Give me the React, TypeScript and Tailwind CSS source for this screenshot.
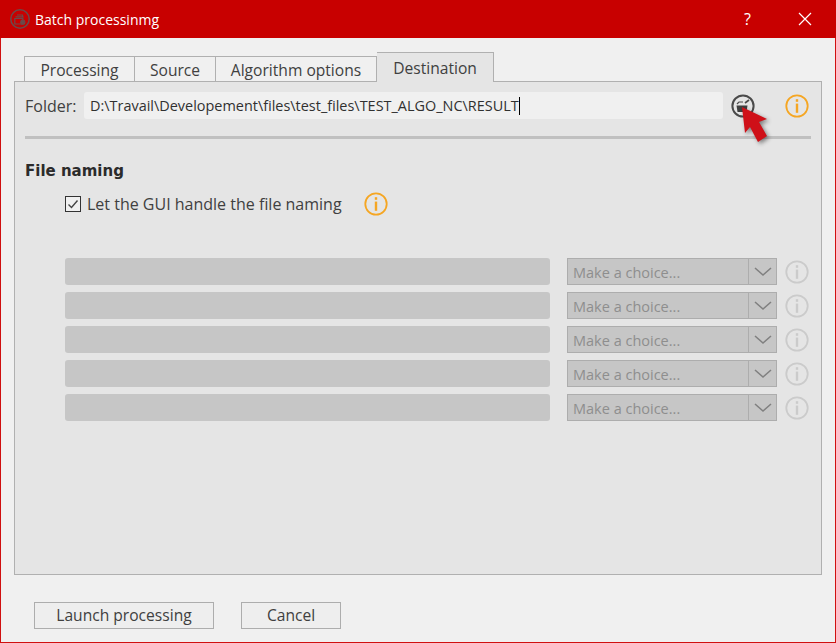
const font = 'font-["Open_Sans","Noto_Sans",sans-serif]';

// info icon, orange when active, grey when disabled
const InfoIcon = ({ disabled = false }: { disabled?: boolean }) => (
  <svg width="24" height="24" viewBox="0 0 24 24" fill="none" className={disabled ? 'text-[#cbcbcb]' : 'text-[#f5a623]'}>
    <circle cx="12" cy="12" r="10.7" stroke="currentColor" strokeWidth="1.8" />
    <rect x="10.8" y="5.2" width="2.4" height="2.6" fill="currentColor" />
    <rect x="10.8" y="9.6" width="2.4" height="9.2" fill="currentColor" />
  </svg>
);

const AppIcon = () => (
  <svg width="20" height="20" viewBox="0 0 20 20" fill="none" stroke="#6b4a4a" strokeWidth="1.2">
    <circle cx="10" cy="10" r="9.2" strokeWidth="1.5" />
    <path d="M7 6h5.5v1.5M5.5 7.8h7.5v1M4.8 9.5h8v5.5h-8z" />
    <circle cx="12.8" cy="13.2" r="2" fill="#6b4a4a" />
  </svg>
);

const FolderIcon = () => (
  <svg width="24" height="24" viewBox="0 0 24 24" fill="none">
    <circle cx="12" cy="12" r="10.6" stroke="#4a4a4a" strokeWidth="2" fill="#e5e5e5" />
    <path d="M5.5 11.5h11l-1 6.5h-9z" fill="#3f3f3f" />
    <path d="M6 10l2-2h4" stroke="#4a4a4a" strokeWidth="1.2" />
    <path d="M14 9l4-3" stroke="#4a4a4a" strokeWidth="1.6" />
  </svg>
);

const Cursor = () => (
  <svg width="44" height="48" viewBox="0 0 44 48" className="absolute left-[6px] top-[7px] drop-shadow-[2px_2px_2px_rgba(0,0,0,0.45)]">
    <path d="M5 6L8 32L13 26L21 41L30 35L22 21L30 18Z" fill="#cf1018" />
  </svg>
);

const Tab = ({ label, className }: { label: string; className: string }) => (
  <div className={`flex items-center justify-center border border-b-0 border-[#b0b0b0] text-[15.6px] text-[#404040] ${className}`}>
    {label}
  </div>
);

const ChoiceRow = () => (
  <div className="flex h-[27px] items-center">
    <div className="h-[27px] w-[485px] rounded-[3px] bg-[#c6c6c6]" />
    <div className="ml-[17px] flex h-[27px] w-[210px] border border-[#adadad] bg-[#c6c6c6]">
      <div className="flex-1 pl-[5px] pt-px text-[14.5px] leading-[26px] text-[#8e8e8e]">Make a choice...</div>
      <div className="flex w-[28px] items-center justify-center border-l border-[#adadad]">
        <svg width="18" height="10" viewBox="0 0 18 10" fill="none" stroke="#808080" strokeWidth="1.6">
          <path d="M1 1l8 7 8-7" />
        </svg>
      </div>
    </div>
    <div className="ml-[8px]">
      <InfoIcon disabled />
    </div>
  </div>
);

export default function App() {
  return (
    <div className={`${font} flex h-[643px] w-[836px] flex-col border border-t-0 border-[#d01010] bg-[#f0f0f0]`}>
      {/* title bar */}
      <div className="-mx-px flex h-[38px] items-center bg-[#c80000] pl-[10px] text-white">
        <AppIcon />
        <span className="ml-[5px] text-[14px]">Batch processinmg</span>
        <span className="ml-auto text-[16px]">?</span>
        <svg width="14" height="14" viewBox="0 0 14 14" className="ml-[47px] mr-[24px]" stroke="white" strokeWidth="1.2">
          <path d="M1 1l12 12M13 1L1 13" />
        </svg>
      </div>

      {/* tabs */}
      <div className="ml-[23px] mt-[14px] flex h-[29px] items-end">
        <Tab label="Processing" className="h-[25px] w-[111px] pt-[3px]" />
        <Tab label="Source" className="h-[25px] w-[81px] border-l-0 pt-[3px]" />
        <Tab label="Algorithm options" className="h-[25px] w-[161px] border-l-0 pt-[3px]" />
        <Tab label="Destination" className="relative z-10 -mb-px h-[30px] w-[117px] border-l-0 bg-[#e5e5e5] pt-[2px]" />
      </div>

      {/* panel */}
      <div className="ml-[13px] h-[494px] w-[808px] border border-[#b0b0b0] bg-[#e5e5e5] pl-[10px]">
        <div className="mt-[10px] flex h-[27px] items-center">
          <span className="w-[59px] text-[16px] text-[#404040]">Folder:</span>
          <div className="flex h-[27px] w-[639px] items-center rounded-[3px] bg-[#f0f0f0] pl-[6px] text-[14.45px] text-[#303030]">
            D:\Travail\Developement\files\test_files\TEST_ALGO_NC\RESULT
            <span className="h-[18px] w-px bg-black" />
          </div>
          <div className="relative ml-[8px] h-[24px] w-[24px]">
            <FolderIcon />
            <Cursor />
          </div>
          <div className="ml-[30px]">
            <InfoIcon />
          </div>
        </div>
        <div className="mt-[17px] h-[3px] w-[786px] bg-[#c0c0c0]" />
        <div className='mt-[21px] font-["DejaVu_Sans",sans-serif] text-[15px] font-bold leading-[22px] text-[#2b2b2b]'>File naming</div>
        <div className="ml-[40px] mt-[10px] flex h-[24px] items-center">
          <div className="flex h-[16px] w-[16px] items-center justify-center border border-[#333333] bg-[#f0f0f0]">
            <svg width="12" height="12" viewBox="0 0 12 12" fill="none" stroke="#444444" strokeWidth="1.4">
              <path d="M1.5 6.5L4.5 9.5L10.5 2.5" />
            </svg>
          </div>
          <span className="ml-[6px] text-[16px] text-[#404040]">Let the GUI handle the file naming</span>
          <div className="ml-[22px]">
            <InfoIcon />
          </div>
        </div>
        <div className="ml-[40px] mt-[42px] flex flex-col gap-[7px]">
          <ChoiceRow />
          <ChoiceRow />
          <ChoiceRow />
          <ChoiceRow />
          <ChoiceRow />
        </div>
      </div>

      {/* bottom buttons */}
      <div className="ml-[33px] mt-[27px] flex gap-[27px]">
        <button className="h-[27px] w-[180px] border border-[#adadad] bg-[#eeeeee] pt-px text-[15.6px] leading-none text-[#404040]">
          Launch processing
        </button>
        <button className="h-[27px] w-[100px] border border-[#adadad] bg-[#eeeeee] pt-px text-[15.6px] leading-none text-[#404040]">
          Cancel
        </button>
      </div>
    </div>
  );
}
